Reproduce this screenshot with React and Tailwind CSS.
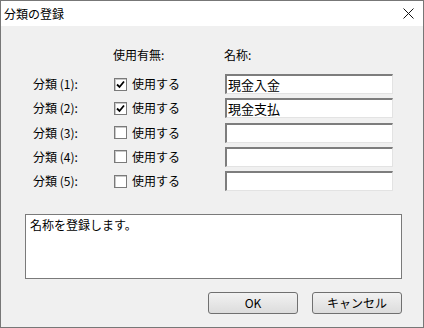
import React from "react";

const rows = [
  { n: 1, checked: true, name: "現金入金" },
  { n: 2, checked: true, name: "現金支払" },
  { n: 3, checked: false, name: "" },
  { n: 4, checked: false, name: "" },
  { n: 5, checked: false, name: "" },
];

function Check({ checked }) {
  return (
    <span className="w-[13px] h-[13px] border border-[#7a7a7a] bg-white flex items-center justify-center shadow-[inset_1px_1px_0_#c8c8c8]">
      {checked ? (
        <svg width="9" height="9" viewBox="0 0 9 9">
          <path d="M1 4.5 L3.5 7 L8 1.5" fill="none" stroke="#000" strokeWidth="1.8" />
        </svg>
      ) : null}
    </span>
  );
}

function Row({ row }) {
  return (
    <div className="flex items-center h-[20px]">
      <span className="w-[81px] pl-[32px] shrink-0 box-content whitespace-nowrap">{"分類 (" + row.n + "):"}</span>
      <div className="w-[111px] flex items-center gap-[5px] shrink-0">
        <Check checked={row.checked} />
        <span>使用する</span>
      </div>
      <div className="w-[168px] h-[20px] bg-white border-t-2 border-l-2 border-r border-b border-t-[#7d7d7d] border-l-[#7d7d7d] border-r-[#e3e3e3] border-b-[#e3e3e3] flex items-center pl-[1px] leading-none text-[13px]">
        {row.name}
      </div>
    </div>
  );
}

export default function App() {
  return (
    <div className="w-[424px] h-[328px] border border-[#777] bg-[#f0f0f0] flex flex-col text-[12px] text-black font-['Noto_Sans_CJK_JP',sans-serif] leading-[16px]">
      <div className="h-[25px] bg-white flex items-center justify-between pl-[3px] pr-[9px] shrink-0">
        <span className="text-[12px]">分類の登録</span>
        <svg width="11" height="11" viewBox="0 0 11 11">
          <path d="M0.5 0.5 L10.5 10.5 M10.5 0.5 L0.5 10.5" stroke="#111" strokeWidth="1" />
        </svg>
      </div>

      <div className="flex mt-[21px] pl-[112px]">
        <span className="w-[111px]">使用有無:</span>
        <span>名称:</span>
      </div>

      <div className="flex flex-col gap-[4.3px] mt-[11px]">
        {rows.map((r) => (
          <Row key={r.n} row={r} />
        ))}
      </div>

      <div className="ml-[24px] mt-[23px] w-[377px] h-[65px] bg-white border border-[#7a7a7a] px-[4px] pt-[2px]">
        名称を登録します。
      </div>

      <div className="flex justify-end gap-[14px] pr-[21px] mt-[13px]">
        <button type="button" className="w-[90px] h-[22px] rounded-[3px] border border-[#707070] bg-gradient-to-b from-[#f2f2f2] to-[#dcdcdc] text-[12px]">
          OK
        </button>
        <button type="button" className="w-[90px] h-[22px] rounded-[3px] border border-[#707070] bg-gradient-to-b from-[#f2f2f2] to-[#dcdcdc] text-[12px]">
          キャンセル
        </button>
      </div>
    </div>
  );
}
